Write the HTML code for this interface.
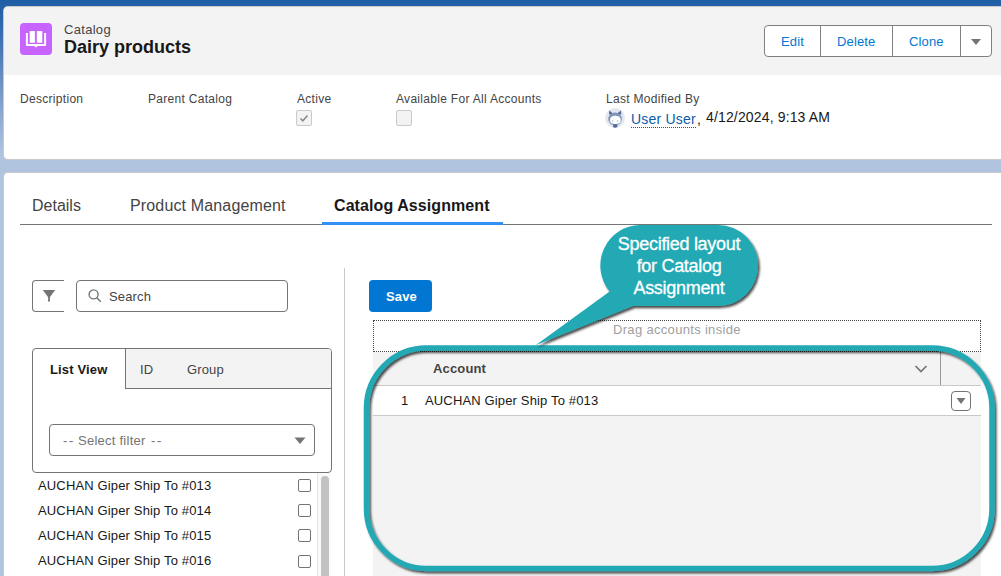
<!DOCTYPE html>
<html><head><meta charset="utf-8">
<style>
*{box-sizing:border-box;margin:0;padding:0}
html,body{width:1001px;height:576px;overflow:hidden}
body{position:relative;font-family:"Liberation Sans",sans-serif;color:#181818;
background:linear-gradient(to bottom,#1f5fa6 0px,#2a66ab 20px,#4072b3 40px,#7f9fcb 100px,#b0c4df 155px,#b0c4df 576px)}
.a{position:absolute;white-space:nowrap}
.card{position:absolute;background:#fff;border-radius:4px;box-shadow:0 0 0 1px #c9c9c9}
</style></head><body>

<!-- card 1 -->
<div class="card" style="left:4px;top:7px;width:1010px;height:152px;overflow:hidden">
  <div class="a" style="left:0;top:0;width:1010px;height:68px;background:#f3f3f3"></div>
</div>
<!-- icon -->
<div class="a" style="left:20px;top:23px;width:32px;height:32px;background:#c763ff;border-radius:4px">
  <svg width="32" height="32" viewBox="0 0 32 32" style="position:absolute;left:0;top:0">
    <path d="M10.4 7.9 H14.9 V19.8 H9.7 V8.6 Q9.7 7.9 10.4 7.9 Z" fill="#fff"/>
    <path d="M16.8 7.9 H21.6 Q22.3 7.9 22.3 8.6 V19.8 H16.8 Z" fill="#fff"/>
    <path d="M5.9 9.9 H7.9 V20.9 H24.1 V9.9 H26.1 V22.2 Q26.1 23 25.3 23 H17.9 L16 24.6 L14.1 23 H6.7 Q5.9 23 5.9 22.2 Z" fill="#fff"/>
  </svg>
</div>
<div class="a" style="left:64px;top:22px;font-size:13px;letter-spacing:0.3px;color:#444">Catalog</div>
<div class="a" style="left:64px;top:37px;font-size:18px;font-weight:700;color:#181818">Dairy products</div>

<!-- buttons -->
<div class="a" style="left:764px;top:25px;width:228px;height:32px;border:1px solid #808080;border-radius:4px;background:#fff"></div>
<div class="a" style="left:820px;top:25px;width:1px;height:32px;background:#808080"></div>
<div class="a" style="left:892px;top:25px;width:1px;height:32px;background:#808080"></div>
<div class="a" style="left:960px;top:25px;width:1px;height:32px;background:#808080"></div>
<div class="a" style="left:781px;top:34px;font-size:13px;letter-spacing:0.15px;color:#0176d3">Edit</div>
<div class="a" style="left:837px;top:34px;font-size:13px;letter-spacing:0.15px;color:#0176d3">Delete</div>
<div class="a" style="left:909px;top:34px;font-size:13px;letter-spacing:0.15px;color:#0176d3">Clone</div>
<svg class="a" style="left:970px;top:38px" width="12" height="8" viewBox="0 0 12 8"><path d="M1 1 L11 1 L6 7 Z" fill="#747474"/></svg>

<!-- fields -->
<div class="a" style="left:20px;top:92px;font-size:12px;letter-spacing:0.3px;color:#444">Description</div>
<div class="a" style="left:148px;top:92px;font-size:12px;letter-spacing:0.3px;color:#444">Parent Catalog</div>
<div class="a" style="left:297px;top:92px;font-size:12px;letter-spacing:0.3px;color:#444">Active</div>
<div class="a" style="left:396px;top:92px;font-size:12px;letter-spacing:0.3px;color:#444">Available For All Accounts</div>
<div class="a" style="left:606px;top:92px;font-size:12px;letter-spacing:0.3px;color:#444">Last Modified By</div>
<div class="a" style="left:296px;top:110px;width:16px;height:16px;border:1px solid #c9c9c9;border-radius:2px;background:#f3f3f3">
  <svg width="14" height="14" viewBox="0 0 14 14" style="position:absolute;left:0;top:0"><path d="M3.5 7.5 L5.8 9.8 L10.5 4.5" stroke="#8a8a8a" stroke-width="1.6" fill="none"/></svg>
</div>
<div class="a" style="left:396px;top:110px;width:16px;height:16px;border:1px solid #c9c9c9;border-radius:2px;background:#f3f3f3"></div>
<!-- avatar -->
<div class="a" style="left:605px;top:108px;width:20px;height:20px;border-radius:50%;background:#e3e8f0;overflow:hidden">
  <svg width="20" height="20" viewBox="0 0 20 20" style="position:absolute;left:0;top:0">
    <path d="M4.2 2.6 L7.2 4.8 L7 6.5 L4 6.5 Z" fill="#566b98"/>
    <path d="M16 2.6 L13 4.8 L13.2 6.5 L16.2 6.5 Z" fill="#566b98"/>
    <ellipse cx="10.1" cy="11" rx="6.8" ry="6.4" fill="#7f92b9"/>
    <rect x="8" y="16.2" width="4.4" height="3.6" rx="1.5" fill="#566b98"/>
    <path d="M5 12.5 Q5 8.6 7.4 8.4 Q8.3 7.4 9.3 8 Q10.6 6.8 11.8 8 Q13 7.6 13.6 8.6 Q15.8 9.2 15.8 12.5 Q15.6 16 10.4 16.1 Q5.2 16 5 12.5 Z" fill="#fff"/>
    <circle cx="7.6" cy="13" r="0.8" fill="#a9b7d0"/>
    <circle cx="12.6" cy="13" r="0.8" fill="#a9b7d0"/>
  </svg>
</div>
<div class="a" style="left:631px;top:111px;font-size:14px;letter-spacing:0.2px;color:#0b5cab">User User</div>
<div class="a" style="left:631px;top:127px;width:65px;height:0;border-top:1px dotted #0b5cab"></div>
<div class="a" style="left:697px;top:111px;font-size:14px;color:#181818">,</div>
<div class="a" style="left:706px;top:109px;font-size:14px;letter-spacing:0.15px;color:#181818">4/12/2024, 9:13 AM</div>

<!-- card 2 -->
<div class="card" style="left:4px;top:173px;width:1010px;height:420px"></div>

<!-- tabs -->
<div class="a" style="left:20px;top:224px;width:972px;height:1px;background:#747474"></div>
<div class="a" style="left:32px;top:197px;font-size:16px;color:#444">Details</div>
<div class="a" style="left:130px;top:197px;font-size:16px;letter-spacing:0.15px;color:#444">Product Management</div>
<div class="a" style="left:334px;top:197px;font-size:16px;letter-spacing:0.08px;font-weight:700;color:#181818">Catalog Assignment</div>
<div class="a" style="left:322px;top:222px;width:181px;height:3px;background:#3390f5"></div>

<!-- left panel -->
<div class="a" style="left:344px;top:268px;width:1px;height:320px;background:#c9c9c9"></div>
<div class="a" style="left:32px;top:280px;width:32px;height:32px;border:1px solid #747474;border-right:none;border-radius:4px 0 0 4px"></div>
<svg class="a" style="left:42px;top:289px" width="14" height="14" viewBox="0 0 14 14"><path d="M0.8 1 H13.2 L7.8 8.2 H6.2 Z" fill="#747474"/><rect x="6.1" y="7" width="1.8" height="5.6" fill="#747474"/></svg>
<div class="a" style="left:76px;top:280px;width:212px;height:32px;border:1px solid #747474;border-radius:4px;background:#fff"></div>
<svg class="a" style="left:88px;top:289px" width="14" height="14" viewBox="0 0 14 14"><circle cx="5.6" cy="5.4" r="4.5" stroke="#747474" stroke-width="1.4" fill="none"/><path d="M8.8 8.8 L12.8 12.8" stroke="#747474" stroke-width="1.5"/></svg>
<div class="a" style="left:109px;top:289px;font-size:13px;letter-spacing:0.15px;color:#444">Search</div>

<div class="a" style="left:32px;top:348px;width:300px;height:125px;border:1px solid #747474;border-radius:4px;background:#fff;overflow:hidden">
  <div class="a" style="left:92px;top:0;width:210px;height:40px;background:#f3f3f3;border-left:1px solid #747474;border-bottom:1px solid #747474"></div>
</div>
<div class="a" style="left:50px;top:362px;font-size:13px;letter-spacing:0.15px;font-weight:700;color:#181818">List View</div>
<div class="a" style="left:140px;top:362px;font-size:13px;letter-spacing:0.15px;color:#444">ID</div>
<div class="a" style="left:187px;top:362px;font-size:13px;letter-spacing:0.15px;color:#444">Group</div>
<div class="a" style="left:49px;top:424px;width:266px;height:32px;border:1px solid #747474;border-radius:4px;background:#fff"></div>
<div class="a" style="left:63px;top:433px;font-size:13px;letter-spacing:1.6px;color:#747474">--</div>
<div class="a" style="left:78px;top:433px;font-size:13px;letter-spacing:0.25px;color:#747474">Select filter</div>
<div class="a" style="left:151px;top:433px;font-size:13px;letter-spacing:1.6px;color:#747474">--</div>
<svg class="a" style="left:294px;top:436px" width="12" height="9" viewBox="0 0 12 9"><path d="M0.5 1.5 H11.5 L6 8 Z" fill="#747474"/></svg>

<div class="a" style="left:38px;top:478px;font-size:13px;letter-spacing:0.15px;color:#181818">AUCHAN Giper Ship To #013</div>
<div class="a" style="left:38px;top:503px;font-size:13px;letter-spacing:0.15px;color:#181818">AUCHAN Giper Ship To #014</div>
<div class="a" style="left:38px;top:528px;font-size:13px;letter-spacing:0.15px;color:#181818">AUCHAN Giper Ship To #015</div>
<div class="a" style="left:38px;top:553px;font-size:13px;letter-spacing:0.15px;color:#181818">AUCHAN Giper Ship To #016</div>
<div class="a" style="left:298px;top:479px;width:13px;height:13px;border:1px solid #747474;border-radius:2px"></div>
<div class="a" style="left:298px;top:504px;width:13px;height:13px;border:1px solid #747474;border-radius:2px"></div>
<div class="a" style="left:298px;top:529px;width:13px;height:13px;border:1px solid #747474;border-radius:2px"></div>
<div class="a" style="left:298px;top:555px;width:13px;height:13px;border:1px solid #747474;border-radius:2px"></div>
<div class="a" style="left:317px;top:473px;width:14px;height:110px;border-left:1px solid #e5e5e5;background:#fafafa"></div>
<div class="a" style="left:321px;top:476px;width:8px;height:110px;border-radius:4px;background:#c2c2c2"></div>

<!-- right panel -->
<div class="a" style="left:369px;top:280px;width:63px;height:32px;border-radius:4px;background:#0176d3"></div>
<div class="a" style="left:386px;top:289px;font-size:13px;letter-spacing:0.15px;font-weight:700;color:#fff">Save</div>
<div class="a" style="left:373px;top:320px;width:608px;height:32px;border:1px dotted #444"></div>
<div class="a" style="left:613px;top:322px;font-size:13px;letter-spacing:0.32px;color:#a0a0a0">Drag accounts inside</div>
<div class="a" style="left:373px;top:352px;width:608px;height:230px;background:#f3f3f3"></div>
<div class="a" style="left:373px;top:385px;width:608px;height:1px;background:#c9c9c9"></div>
<div class="a" style="left:373px;top:386px;width:608px;height:30px;background:#fff;border-bottom:1px solid #c9c9c9"></div>
<div class="a" style="left:940px;top:352px;width:1px;height:33px;background:#999"></div>
<div class="a" style="left:433px;top:361px;font-size:13px;letter-spacing:0.15px;font-weight:700;color:#444">Account</div>
<svg class="a" style="left:914px;top:364px" width="14" height="10" viewBox="0 0 14 10"><path d="M1.5 2 L7 7.5 L12.5 2" stroke="#747474" stroke-width="1.7" fill="none"/></svg>
<div class="a" style="left:401px;top:393px;font-size:13px;letter-spacing:0.15px;color:#181818">1</div>
<div class="a" style="left:425px;top:393px;font-size:13px;letter-spacing:0.15px;color:#181818">AUCHAN Giper Ship To #013</div>
<div class="a" style="left:951px;top:391px;width:20px;height:20px;border:1px solid #747474;border-radius:4px;background:#fff"></div>
<svg class="a" style="left:955px;top:396px" width="12" height="10" viewBox="0 0 12 10"><path d="M1.5 2 H10.5 L6 8 Z" fill="#747474"/></svg>

<!-- annotation -->
<svg class="a" style="left:0;top:0" width="1001" height="576" viewBox="0 0 1001 576">
  <defs>
    <filter id="sh" x="-10%" y="-10%" width="120%" height="130%">
      <feDropShadow dx="1.8" dy="2.2" stdDeviation="1.3" flood-color="#000" flood-opacity="0.7"/>
    </filter>
  </defs>
  <rect x="366.5" y="348" width="625.5" height="220.5" rx="60" ry="60" fill="none" stroke="#22a9b4" stroke-width="5.5" filter="url(#sh)"/>
  <path filter="url(#sh)" fill="#22a9b4" d="M640 225 H718 A40 40.5 0 0 1 718 306 H633 L535.6 345.2 L609.6 291.4 A40 40.5 0 0 1 640 225 Z"/>
  <g font-family="Liberation Sans" font-size="18" fill="#fff" stroke="#fff" stroke-width="0.3" text-anchor="middle" letter-spacing="-0.3">
    <text x="679" y="250">Specified layout</text>
    <text x="679" y="272">for Catalog</text>
    <text x="679" y="294">Assignment</text>
  </g>
</svg>

</body></html>
